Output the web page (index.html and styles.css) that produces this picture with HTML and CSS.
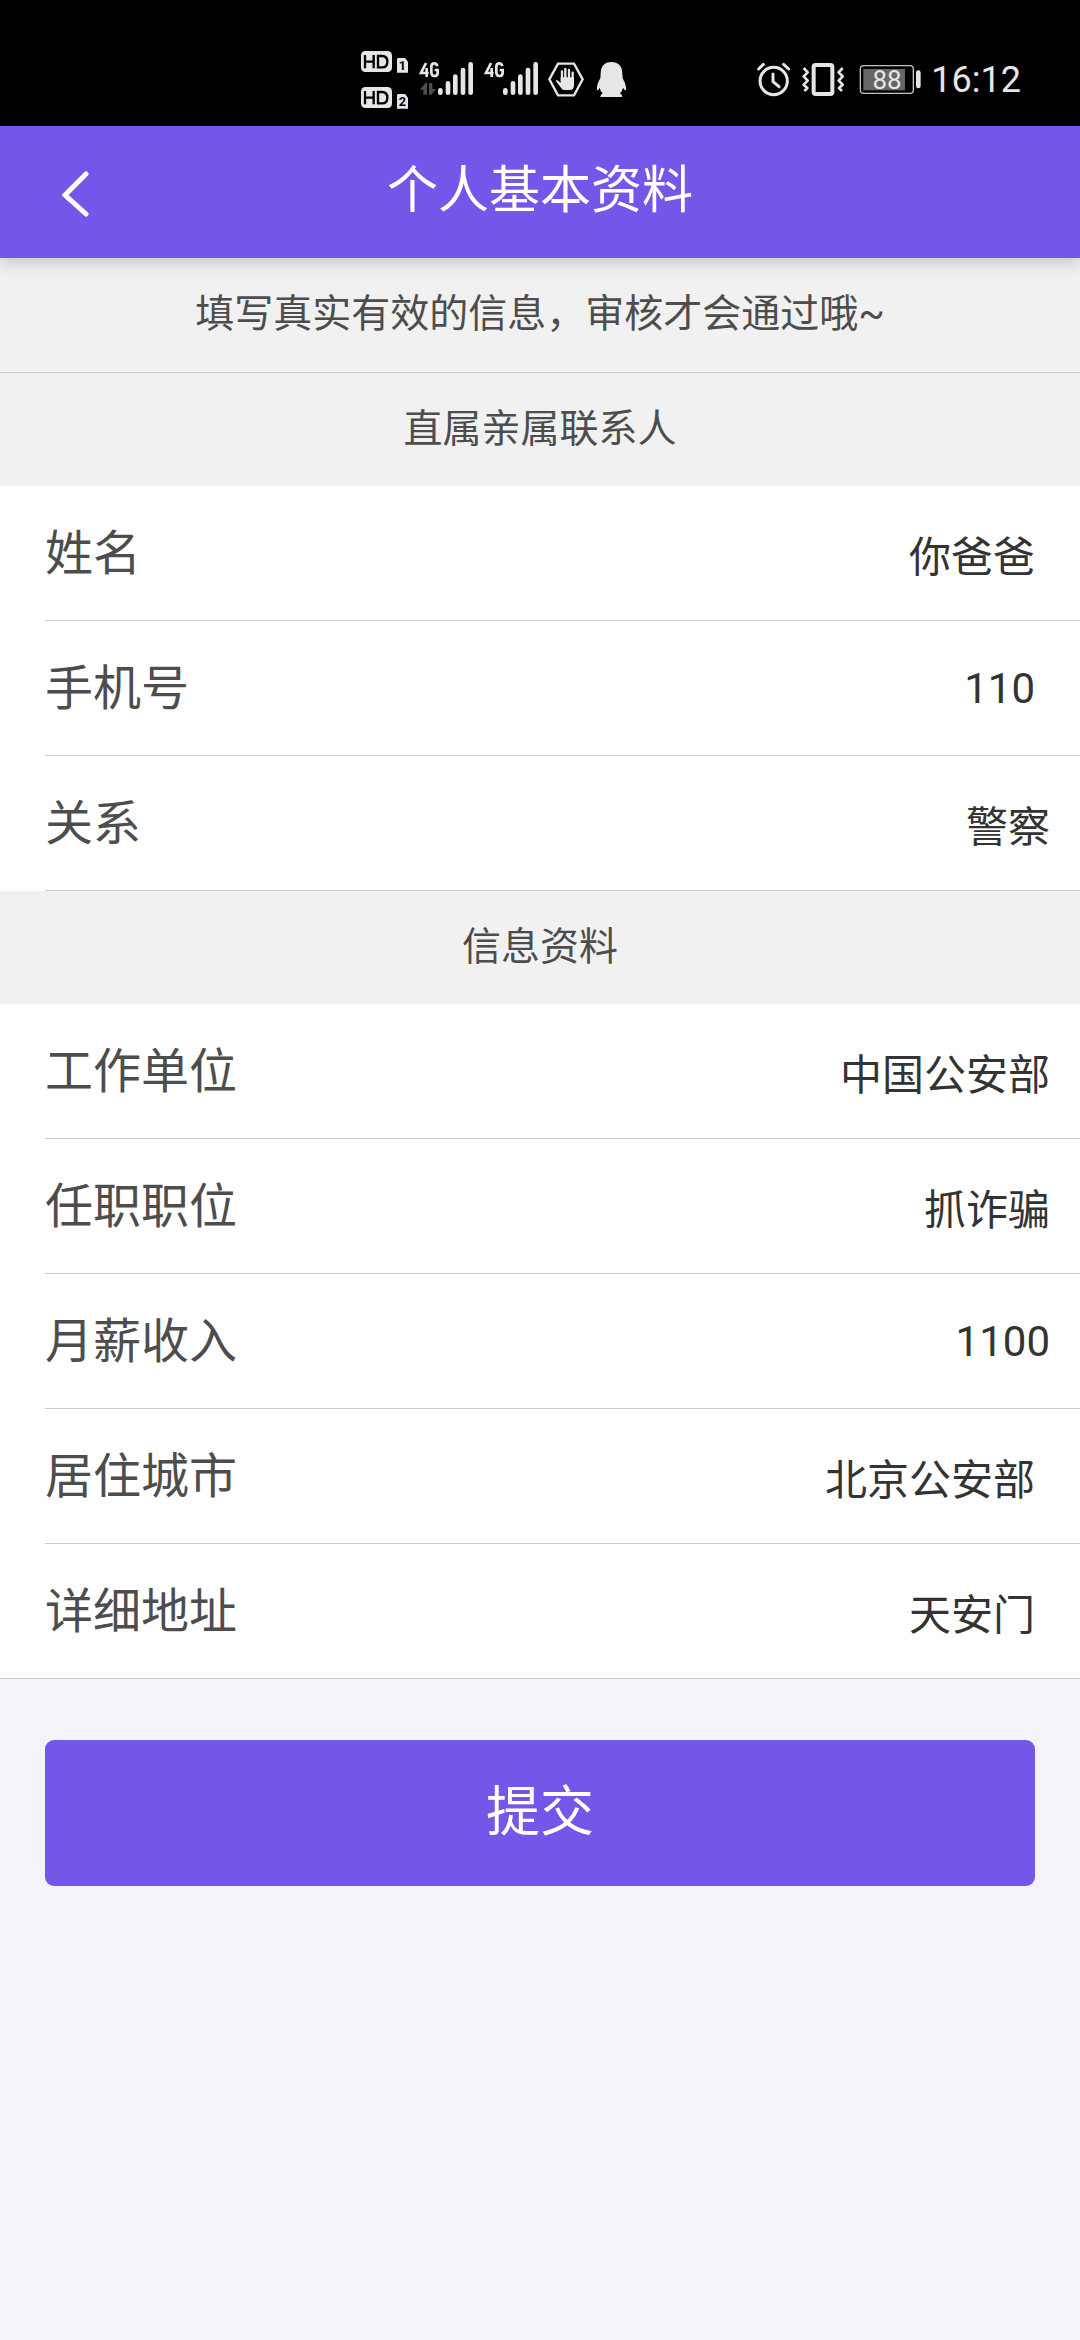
FILE: index.html
```html
<!DOCTYPE html>
<html lang="zh-CN">
<head>
    <meta charset="UTF-8">
    <meta name="viewport" content="width=device-width, initial-scale=1.0">
    <title>个人基本资料</title>
    <link rel="stylesheet" href="styles.css">
</head>
<body>

<div class="status-bar">
    <div class="status-group">
        <svg class="icon-hd" viewBox="33 0 141 240">
            <rect x="33" y="33" width="93" height="63" rx="13" fill="#e6e6e6"/>
            <path d="M45 45v40M71 45v40M45 65h26M84 48v34h12q16 0 16-17t-16-17z" fill="none" stroke="#000" stroke-width="7"/>
            <path d="M145 54h20l9 11v33h-33V58q0-4 4-4z" fill="#e6e6e6"/>
            <text x="157" y="91" class="sim-number">1</text>
            <rect x="33" y="141" width="93" height="63" rx="13" fill="#e6e6e6"/>
            <path d="M45 153v40M71 153v40M45 173h26M84 156v34h12q16 0 16-17t-16-17z" fill="none" stroke="#000" stroke-width="7"/>
            <path d="M145 162h20l9 11v33h-33v-40q0-4 4-4z" fill="#e6e6e6"/>
            <text x="157" y="199" class="sim-number">2</text>
        </svg>
        <svg class="icon-signal" viewBox="204 0 165 240">
            <path d="M228 69l-15 30h23M230 84v27M262 79q-2-9-9-9-9 0-9 10v17q0 11 9 11 10 0 10-10v-8h-9" fill="none" stroke="#e6e6e6" stroke-width="8"/>
            <path d="M220 164v-15h-10l16-20h5v35zM237 129h10v18h11l-14 17h-7z" fill="#4d4d4d"/>
            <path d="M271 151v7M294 130v28M316 110v48M339 90v68M362 73v85" stroke="#e6e6e6" stroke-width="14" stroke-linecap="round"/>
        </svg>
        <svg class="icon-signal" viewBox="204 0 165 240">
            <path d="M228 69l-15 30h23M230 84v27M262 79q-2-9-9-9-9 0-9 10v17q0 11 9 11 10 0 10-10v-8h-9" fill="none" stroke="#e6e6e6" stroke-width="8"/>
            <path d="M271 151v7M294 130v28M316 110v48M339 90v68M362 73v85" stroke="#e6e6e6" stroke-width="14" stroke-linecap="round"/>
        </svg>
        <svg class="icon-hand" viewBox="204 0 108 240">
            <path d="M208 118l26-47h48l26 47-26 48h-48z" fill="none" stroke="#e6e6e6" stroke-width="7"/>
            <path d="M246 94v28M256 87v34M267 90v30M278 98v26" stroke="#e6e6e6" stroke-width="7" stroke-linecap="round"/>
            <path d="M242 112h40v24q0 14-12 14h-18q-5 0-9-7l-15-19q-1-4 3-4l11 8z" fill="#e6e6e6"/>
        </svg>
        <svg class="icon-penguin" viewBox="342 0 96 240">
            <path d="M394 66q32 0 33 35l1 14q12 20 10 36-5 0-9-8-2 11-9 17 7 4 7 11h-66q0-7 7-11-7-6-9-17-3 8-8 8-2-16 10-36l1-14q1-35 32-35z" fill="#e6e6e6"/>
        </svg>
    </div>
    <div class="status-group">
        <svg class="icon-alarm" viewBox="51 0 99 240">
            <circle cx="101" cy="123" r="41" fill="none" stroke="#e6e6e6" stroke-width="9"/>
            <path d="M99 102v23l18 15M56 87l14-14M146 87l-15-14" fill="none" stroke="#e6e6e6" stroke-width="9" stroke-linecap="round" stroke-linejoin="round"/>
        </svg>
        <svg class="icon-vibrate" viewBox="180 0 132 240">
            <rect x="221" y="75" width="56" height="87" rx="6" fill="none" stroke="#e6e6e6" stroke-width="12"/>
            <path d="M191 84l12 13-12 12 12 13-12 12 11 10-9 9M308 84l-12 13 12 12-12 13 12 12-11 10 9 9" fill="none" stroke="#e6e6e6" stroke-width="8" stroke-linejoin="round"/>
        </svg>
        <svg class="icon-battery" viewBox="342 0 201 240">
            <rect x="361" y="77" width="159" height="83" rx="10" fill="none" stroke="#c4c4c4" stroke-width="4"/>
            <rect x="370" y="87" width="125" height="64" fill="#666"/>
            <path d="M535 98v40" stroke="#e6e6e6" stroke-width="14" stroke-linecap="round"/>
            <text x="441" y="147" class="battery-level">88</text>
        </svg>
        <span class="clock">16:12</span>
    </div>
</div>

<header class="header">
    <a href="#" class="back" aria-label="返回">
        <svg class="icon-back" viewBox="0 0 28 46">
            <path d="M24 3L3 24L24 43" fill="none" stroke="#fff" stroke-width="5" stroke-linecap="round"/>
        </svg>
    </a>
    <h1>个人基本资料</h1>
</header>

<form class="profile-form">
    <p class="tip">填写真实有效的信息，审核才会通过哦~</p>

    <h2>直属亲属联系人</h2>
    <div class="rows">
        <div class="row">
            <label for="name">姓名</label>
            <input type="text" id="name" name="name" value="你爸爸">
        </div>
        <div class="row">
            <label for="phone">手机号</label>
            <input type="text" id="phone" name="phone" value="110">
        </div>
        <div class="row wide">
            <label for="relation">关系</label>
            <input type="text" id="relation" name="relation" value="警察">
        </div>
    </div>

    <h2>信息资料</h2>
    <div class="rows last">
        <div class="row wide">
            <label for="company">工作单位</label>
            <input type="text" id="company" name="company" value="中国公安部">
        </div>
        <div class="row wide">
            <label for="position">任职职位</label>
            <input type="text" id="position" name="position" value="抓诈骗">
        </div>
        <div class="row wide">
            <label for="income">月薪收入</label>
            <input type="text" id="income" name="income" value="1100">
        </div>
        <div class="row">
            <label for="city">居住城市</label>
            <input type="text" id="city" name="city" value="北京公安部">
        </div>
        <div class="row">
            <label for="address">详细地址</label>
            <input type="text" id="address" name="address" value="天安门">
        </div>
    </div>

    <div class="submit">
        <button type="button">提交</button>
    </div>
</form>

</body>
</html>
```
FILE: styles.css
```css
* {
    box-sizing: border-box;
}

body {
    margin: 0;
    background-color: #f4f3f9;
    color: #4d4d4d;
    font-family: Roboto, 'Noto Sans CJK SC', sans-serif;
}

/* status bar */
.status-bar {
    display: flex;
    justify-content: flex-end;
    gap: 131px;
    padding: 40px 59px 6px;
    background-color: #000;
}

.status-group {
    display: flex;
    gap: 10px;
}

.status-group svg {
    height: 80px;
}

.icon-hd {
    width: 47px;
}

.icon-signal {
    width: 55px;
}

.icon-hand {
    width: 36px;
}

.icon-penguin {
    width: 32px;
}

.icon-alarm {
    width: 33px;
}

.icon-vibrate {
    width: 44px;
}

.icon-battery {
    width: 67px;
}

.sim-number {
    font-size: 38px;
    font-weight: bold;
    text-anchor: middle;
    fill: #000;
}

.battery-level {
    font-size: 78px;
    text-anchor: middle;
    fill: #e6e6e6;
}

.clock {
    color: #e6e6e6;
    font-size: 36px;
    line-height: 80px;
}

/* header */
.header {
    position: relative;
    display: grid;
    grid-template-columns: 150px 1fr 150px;
    background-color: #7456e9;
    box-shadow: 0 6px 14px rgba(0, 0, 0, 0.16);
}

.back {
    display: flex;
    align-items: center;
    padding: 4px 0 0 62px;
}

.icon-back {
    width: 28px;
    height: 46px;
}

h1 {
    margin: 0;
    padding-bottom: 2px;
    color: #fff;
    font-size: 51px;
    font-weight: normal;
    line-height: 130px;
    text-align: center;
}

/* form */
.tip,
h2 {
    margin: 0;
    background-color: #f1f1f1;
    font-size: 39px;
    font-weight: normal;
    line-height: 112px;
    text-align: center;
}

.tip {
    padding-bottom: 2px;
    border-bottom: 1px solid #ccc;
}

h2 {
    padding-bottom: 1px;
}

.rows {
    padding-left: 45px;
    background-color: #fff;
}

.row {
    display: flex;
    align-items: center;
    height: 135px;
    padding-right: 45px;
    border-bottom: 1px solid #ccc;
}

.row.wide {
    padding-right: 30px;
}

.rows.last {
    border-bottom: 1px solid #ccc;
}

.rows.last .row:last-child {
    height: 134px;
    border-bottom: none;
}

label {
    padding-bottom: 8px;
    font-size: 48px;
}

input {
    flex: 1;
    min-width: 0;
    padding: 0;
    border: none;
    outline: none;
    background: none;
    color: #333;
    font-family: inherit;
    font-size: 42px;
    text-align: right;
}

.submit {
    padding: 61px 45px;
}

button {
    width: 100%;
    height: 146px;
    padding: 0 0 12px;
    border: none;
    border-radius: 9px;
    background-color: #7456e9;
    color: #fff;
    font-family: inherit;
    font-size: 54px;
}
```
